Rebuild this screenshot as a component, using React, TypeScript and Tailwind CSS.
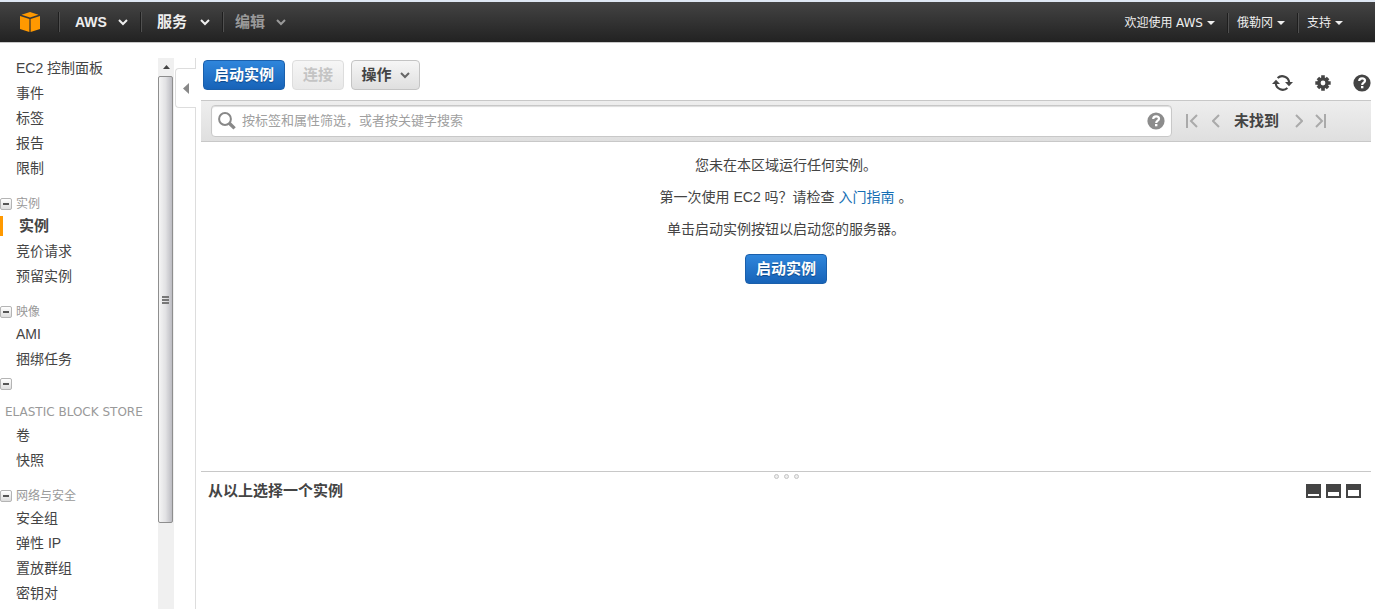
import { ReactNode } from "react";
import clsx from "clsx";

interface NavGroup {
  title: string;
  wide?: boolean;
  items: string[];
}

const topLinks = ["EC2 控制面板", "事件", "标签", "报告", "限制"];

const groups: NavGroup[] = [
  { title: "实例", items: ["实例", "竞价请求", "预留实例"] },
  { title: "映像", items: ["AMI", "捆绑任务"] },
  { title: "ELASTIC BLOCK STORE", wide: true, items: ["卷", "快照"] },
  { title: "网络与安全", items: ["安全组", "弹性 IP", "置放群组", "密钥对"] },
];

const Logo = () => (
  <svg width="20" height="20" viewBox="0 0 20 20" fill="#ff9900">
    <path d="M10 0 18.5 2.7 10 5.6 1.5 2.7Z" />
    <path d="M0 4 9.4 7V20L0 17Z" />
    <path d="M20 4 10.6 7V20L20 17Z" />
  </svg>
);

const Chevron = ({ className }: { className?: string }) => (
  <svg
    width="10"
    height="7"
    viewBox="0 0 10 7"
    fill="none"
    stroke="currentColor"
    strokeWidth="2"
    className={className}
  >
    <path d="M1 1 5 5 9 1" />
  </svg>
);

const Caret = () => (
  <svg width="8" height="4" viewBox="0 0 8 4" fill="currentColor">
    <path d="M0 0H8L4 4Z" />
  </svg>
);

const HelpIcon = ({ className }: { className?: string }) => (
  <svg width="18" height="18" viewBox="0 0 18 18" className={className}>
    <circle cx="9" cy="9" r="8.6" fill="currentColor" />
    <path
      d="M6.2 7.1C6.2 5.2 7.4 4.3 9.1 4.3S12 5.3 12 6.8C12 8.6 9.2 8.8 9.2 10.9"
      fill="none"
      stroke="#fff"
      strokeWidth="2.2"
    />
    <rect x="8" y="12" width="2.4" height="2.3" fill="#fff" />
  </svg>
);

const RefreshIcon = () => (
  <svg width="21" height="18" viewBox="0 0 21 18">
    <g fill="none" stroke="currentColor" strokeWidth="2.2">
      <path d="M5.6 4A7 7 0 0 1 17.2 8.5" />
      <path d="M15.4 14A7 7 0 0 1 3.8 9.5" />
    </g>
    <path d="M13 8H21L17 12.2Z" fill="currentColor" />
    <path d="M0 10H8L4 5.8Z" fill="currentColor" />
  </svg>
);

const GearIcon = () => (
  <svg width="16" height="16" viewBox="0 0 16 16">
    <g stroke="currentColor" strokeWidth="3.6">
      <path d="M8 0.3V15.7M0.3 8H15.7M2.9 2.9 13.1 13.1M13.1 2.9 2.9 13.1" />
    </g>
    <circle cx="8" cy="8" r="5.8" fill="currentColor" />
    <circle cx="8" cy="8" r="2.4" fill="#fff" />
  </svg>
);

const SearchIcon = () => (
  <svg width="18" height="18" viewBox="0 0 18 18" fill="none" stroke="#888">
    <circle cx="7" cy="7" r="5.9" strokeWidth="2" />
    <path d="M11.3 11.3 16.6 16.4" strokeWidth="3.4" />
  </svg>
);

const Divider = () => (
  <div className="h-5 w-0.5 shrink-0 border-l border-r border-l-[#1e1e1e] border-r-[#505050]" />
);

const PrimaryButton = ({ children }: { children: ReactNode }) => (
  <button className="flex h-[30px] w-[82px] items-center justify-center rounded border border-[#1a5fab] bg-linear-to-b from-[#2f86dc] to-[#1763b8] text-[15px] leading-5 font-bold text-white [text-shadow:0_1px_1px_#0d4687]">
    {children}
  </button>
);

const Header = () => {
  return (
    <header className="flex h-[43px] shrink-0 items-center justify-between border-t-2 border-b border-t-[#dfe8f4] border-b-[#c8c8c8] bg-linear-to-b from-[#444] to-[#222] [text-shadow:0_1px_1px_#000]">
      <nav className="flex items-center pl-5 text-[15px] leading-5 font-bold text-[#eee]">
        <a href="#" aria-label="AWS" className="mr-[18px]">
          <Logo />
        </a>
        <Divider />
        <button className="flex w-20 items-center justify-between pr-3 pl-[15px]">
          <span className="text-sm">AWS</span>
          <Chevron />
        </button>
        <Divider />
        <button className="flex w-20 items-center justify-between pr-3 pl-[15px]">
          <span>服务</span>
          <Chevron />
        </button>
        <Divider />
        <button className="flex w-[62px] items-center justify-between pl-[11px] text-[#999]">
          <span>编辑</span>
          <Chevron />
        </button>
      </nav>
      <nav className="flex items-center pt-0.5 pr-8 text-xs leading-5 text-[#eee]">
        <button className="flex items-center gap-1 pr-3">
          <span>
            欢迎使用 <span className="font-['DejaVu_Sans']">AWS</span>
          </span>
          <Caret />
        </button>
        <Divider />
        <button className="flex items-center gap-1 pr-3 pl-2">
          <span>俄勒冈</span>
          <Caret />
        </button>
        <Divider />
        <button className="flex items-center gap-1 pl-2">
          <span>支持</span>
          <Caret />
        </button>
      </nav>
    </header>
  );
};

const Toggle = () => (
  <button
    aria-label="折叠"
    className="flex size-3 shrink-0 items-center justify-center rounded-xs border border-[#b4b4b4] bg-linear-to-b from-white to-[#ddd]"
  >
    <span className="h-0.5 w-1.5 bg-[#555]" />
  </button>
);

const NavItem = ({ label, active }: { label: string; active?: boolean }) => (
  <li
    className={clsx(
      "flex h-[25px] items-center pb-0.5",
      active && "text-[15px] font-bold"
    )}
  >
    <span className={clsx("h-5 w-[3px]", active && "bg-[#ff9900]")} />
    <a href="#" className={active ? "pl-4" : "pl-[13px]"}>
      {label}
    </a>
  </li>
);

const Sidebar = () => {
  return (
    <aside className="flex shrink-0">
      <nav className="w-[158px] overflow-hidden pt-[13px] text-sm leading-5 whitespace-nowrap">
        <ul>
          {topLinks.map((label) => (
            <NavItem key={label} label={label} />
          ))}
        </ul>
        {groups.map((group) => (
          <section key={group.title}>
            {group.wide ? (
              <div className="pt-1.5 pb-px">
                <Toggle />
                <h2 className="pt-3 pl-[5px] font-['DejaVu_Sans'] text-xs leading-5 text-[#999]">
                  {group.title}
                </h2>
              </div>
            ) : (
              <div className="flex items-center gap-1 pt-[13px]">
                <Toggle />
                <h2 className="text-xs leading-5 text-[#999]">{group.title}</h2>
              </div>
            )}
            <ul>
              {group.items.map((label) => (
                <NavItem
                  key={label}
                  label={label}
                  active={label === group.title}
                />
              ))}
            </ul>
          </section>
        ))}
      </nav>

      {/* scroll track */}
      <div className="mt-[15px] flex w-4 flex-col bg-[#f0f0f0]">
        <div className="flex h-[18px] items-center justify-center text-[#444]">
          <svg width="7" height="4" viewBox="0 0 7 4" fill="currentColor">
            <path d="M0 4H7L3.5 0Z" />
          </svg>
        </div>
        <div className="mr-px flex flex-[26] flex-col items-center justify-center gap-px rounded-xs border border-[#8e8e8e] bg-linear-to-r from-[#f5f5f5] via-[#e2e2e4] to-[#bcbcc2]">
          <span className="h-0.5 w-[7px] bg-[#777]" />
          <span className="h-0.5 w-[7px] bg-[#777]" />
          <span className="h-0.5 w-[7px] bg-[#777]" />
        </div>
        <div className="flex-[5]" />
      </div>

      {/* collapse handle */}
      <div className="mt-[15px] flex w-[22px] flex-col">
        <div className="h-2.5 border-r border-[#ddd]" />
        <button
          aria-label="收起"
          className="ml-px flex h-10 items-center rounded-l border border-r-0 border-[#ddd] pl-[7px] text-[#888]"
        >
          <svg width="6" height="11" viewBox="0 0 6 11" fill="currentColor">
            <path d="M6 0V11L0 5.5Z" />
          </svg>
        </button>
        <div className="flex-1 border-r border-[#ddd]" />
      </div>
    </aside>
  );
};

const Toolbar = () => {
  return (
    <div className="flex h-[57px] items-start justify-between pt-[17px]">
      <div className="flex gap-[7px] pl-0.5 text-[15px] leading-5 font-bold">
        <PrimaryButton>启动实例</PrimaryButton>
        <button
          disabled
          className="flex h-[30px] w-[52px] items-center justify-center rounded border border-[#ddd] bg-linear-to-b from-[#f6f6f6] to-[#e8e8e8] text-[#c4c4c4]"
        >
          连接
        </button>
        <button className="flex h-[30px] w-[69px] items-center justify-center gap-2 rounded border border-[#c4c4c4] bg-linear-to-b from-[#f6f6f6] to-[#dfdfdf]">
          操作
          <Chevron className="text-[#666]" />
        </button>
      </div>
      <div className="flex items-center gap-[22px] pt-3.5">
        <button aria-label="刷新">
          <RefreshIcon />
        </button>
        <button aria-label="设置">
          <GearIcon />
        </button>
        <button aria-label="帮助">
          <HelpIcon />
        </button>
      </div>
    </div>
  );
};

const SearchBar = () => {
  return (
    <div className="flex h-[42px] items-center border-t border-b border-[#c8c8c8] bg-linear-to-b from-[#eee] to-[#dfdfdf] pr-11 pl-2.5">
      <label className="flex h-8 flex-1 items-center gap-1.5 rounded border border-[#c8c8c8] bg-white px-1.5 shadow-[inset_0_1px_1px_#ddd]">
        <SearchIcon />
        <input
          type="text"
          aria-label="搜索"
          placeholder="按标签和属性筛选，或者按关键字搜索"
          className="min-w-0 flex-1 text-[13px] leading-5 outline-none placeholder:text-[#a0a0a0]"
        />
        <HelpIcon className="text-[#8c8c8c]" />
      </label>
      <div className="flex items-center pl-3.5 text-[#aaa]">
        <button aria-label="第一页" className="mr-3.5">
          <svg width="12" height="14" viewBox="0 0 12 14" fill="none" stroke="currentColor" strokeWidth="2">
            <path d="M1 0V14M11 1 5 7 11 13" />
          </svg>
        </button>
        <button aria-label="上一页" className="mr-3.5">
          <svg width="8" height="14" viewBox="0 0 8 14" fill="none" stroke="currentColor" strokeWidth="2">
            <path d="M7 1 1 7 7 13" />
          </svg>
        </button>
        <span className="text-[15px] leading-5 font-bold text-[#444]">未找到</span>
        <button aria-label="下一页" className="ml-4">
          <svg width="8" height="14" viewBox="0 0 8 14" fill="none" stroke="currentColor" strokeWidth="2">
            <path d="M1 1 7 7 1 13" />
          </svg>
        </button>
        <button aria-label="最后一页" className="ml-3">
          <svg width="12" height="14" viewBox="0 0 12 14" fill="none" stroke="currentColor" strokeWidth="2">
            <path d="M1 1 7 7 1 13M10 0V14" />
          </svg>
        </button>
      </div>
    </div>
  );
};

const EmptyState = () => {
  return (
    <div className="flex flex-1 flex-col items-center gap-3 pt-[13px] text-sm leading-5">
      <p>您未在本区域运行任何实例。</p>
      <p>
        第一次使用 EC2 吗？请检查{" "}
        <a href="#" className="text-[#146eb4]">
          入门指南
        </a>{" "}
        。
      </p>
      <p>单击启动实例按钮以启动您的服务器。</p>
      <div className="pt-[3px]">
        <PrimaryButton>启动实例</PrimaryButton>
      </div>
    </div>
  );
};

const Dot = () => (
  <span className="size-[5px] rounded-full border border-[#c4c4c4] bg-[#eee]" />
);

const DetailsPanel = () => {
  return (
    <section className="h-[138px] shrink-0 border-t border-[#c8c8c8]">
      <div className="flex h-[9px] items-center justify-center gap-[5px]">
        <Dot />
        <Dot />
        <Dot />
      </div>
      <div className="flex items-center justify-between pr-2.5 pl-[7px]">
        <h2 className="text-[15px] leading-5 font-bold">从以上选择一个实例</h2>
        <div className="flex gap-[5px]">
          <button aria-label="最小化" className="flex h-3.5 w-[15px] items-end bg-[#444] p-0.5">
            <span className="h-0.5 w-full bg-white" />
          </button>
          <button aria-label="半屏" className="flex h-3.5 w-[15px] items-end bg-[#444] p-0.5">
            <span className="h-1 w-full bg-white" />
          </button>
          <button aria-label="最大化" className="flex h-3.5 w-[15px] items-end bg-[#444] p-0.5">
            <span className="h-1.5 w-full bg-white" />
          </button>
        </div>
      </div>
    </section>
  );
};

const App = () => {
  return (
    <div className="flex h-screen flex-col overflow-hidden bg-white font-['Liberation_Sans','Noto_Sans_CJK_SC',sans-serif] text-[#444]">
      <Header />
      <div className="flex min-h-0 flex-1">
        <Sidebar />
        <main className="flex min-w-0 flex-1 flex-col pr-1 pl-[5px]">
          <Toolbar />
          <SearchBar />
          <EmptyState />
          <DetailsPanel />
        </main>
      </div>
    </div>
  );
};

export default App;
